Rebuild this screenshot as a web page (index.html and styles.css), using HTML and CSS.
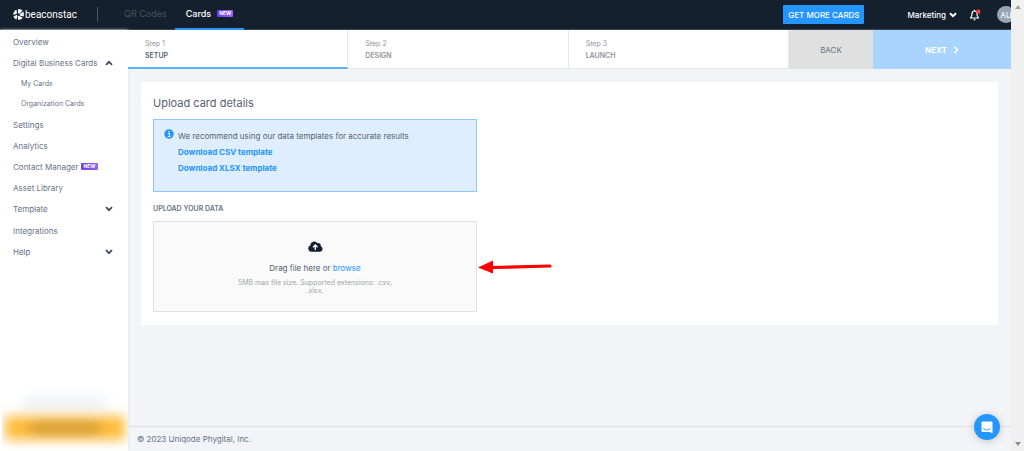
FILE: index.html
```html
<!DOCTYPE html>
<html lang="en">
  <head>
    <meta charset="UTF-8" />
    <meta name="viewport" content="width=device-width, initial-scale=1" />
    <title>Upload card details</title>
    <link rel="stylesheet" href="styles.css">
  </head>
  <body>
    <div class="app">
      <header class="topbar">
        <a class="logo" href="#">
          <svg viewBox="0 0 22 22" width="11" height="11">
            <path d="M10 0.500C14 0 17 1 19 3L13 9.500L10 8.500z" fill="#fff" />
            <path d="M20.500 5C22 8 22 12 21 15L13.500 13V10.500z" fill="#fff" />
            <path d="M19.500 17.500C17 20.500 14 21.700 10 21.500L9.500 14L12 13.500z" fill="#fff" />
            <path d="M7 21C4 20 2 18 1 15L7.500 11.500L8.500 13.500z" fill="#fff" />
            <path d="M0.500 12C0 8 3 3 7 1.500L8 9z" fill="#fff" />
          </svg>
          <span>beaconstac</span>
        </a>
        <nav class="tabs">
          <a class="tab muted" href="#">QR Codes</a>
          <a class="tab active" href="#">Cards <span class="badge">NEW</span></a>
        </nav>
        <div class="account">
          <button class="more-cards">GET MORE CARDS</button>
          <button class="org">
            Marketing
            <svg viewBox="0 0 8 6" width="8" height="6"><path d="M1 1.2L4 4.2L7 1.2" fill="none" stroke="#fff" stroke-width="2" /></svg>
          </button>
          <button class="bell" aria-label="Notifications">
            <svg viewBox="0 0 24 24" width="12" height="12">
              <path d="M3 18c3-3 3-5 3-8 0-4 2-6 5-6s5 2 5 6c0 3 0 5 3 8z" fill="none" stroke="#fff" stroke-width="2.4" stroke-linejoin="round" />
              <path d="M8.500 20.500h5c0 3-5 3-5 0z" fill="#fff" />
              <path d="M11 4V1.500" stroke="#fff" stroke-width="2.400" />
              <circle cx="18.500" cy="5.500" r="4.500" fill="#fb3b4e" />
            </svg>
          </button>
          <button class="avatar">AU</button>
        </div>
      </header>

      <div class="body">
        <aside class="sidebar">
          <nav class="menu">
            <a href="#">Overview</a>
            <a class="group" href="#">
              Digital Business Cards
              <svg viewBox="0 0 8 6" width="8" height="6"><path d="M1 4.800L4 1.800L7 4.800" /></svg>
            </a>
            <a class="sub" href="#">My Cards</a>
            <a class="sub" href="#">Organization Cards</a>
            <a href="#">Settings</a>
            <a href="#">Analytics</a>
            <a href="#">Contact Manager <span class="badge">NEW</span></a>
            <a href="#">Asset Library</a>
            <a class="group" href="#">
              Template
              <svg viewBox="0 0 8 6" width="8" height="6"><path d="M1 1.200L4 4.200L7 1.200" /></svg>
            </a>
            <a href="#">Integrations</a>
            <a class="group" href="#">
              Help
              <svg viewBox="0 0 8 6" width="8" height="6"><path d="M1 1.200L4 4.200L7 1.200" /></svg>
            </a>
          </nav>
          <div class="promo">
            <div class="promo-text"></div>
            <div class="promo-button"><div class="promo-label"></div></div>
          </div>
        </aside>

        <main class="main">
          <div class="steps">
            <div class="step current">
              <span>Step 1</span>
              <strong>SETUP</strong>
            </div>
            <div class="step">
              <span>Step 2</span>
              <strong>DESIGN</strong>
            </div>
            <div class="step">
              <span>Step 3</span>
              <strong>LAUNCH</strong>
            </div>
            <button class="back">BACK</button>
            <button class="next">
              NEXT
              <svg viewBox="0 0 6 8" width="6" height="8"><path d="M1.500 1L4.500 4L1.500 7" fill="none" stroke="#fff" stroke-width="1.600" /></svg>
            </button>
          </div>

          <section class="card">
            <h1>Upload card details</h1>
            <div class="notice">
              <svg viewBox="0 0 20 20" width="10" height="10">
                <circle cx="10" cy="10" r="9.500" fill="#2595ff" />
                <path d="M8 9h3v6M7.500 15h5.500" fill="none" stroke="#fff" stroke-width="2" />
                <circle cx="10" cy="5.500" r="1.600" fill="#fff" />
              </svg>
              <div class="notice-text">
                <p>We recommend using our data templates for accurate results</p>
                <a href="#">Download CSV template</a>
                <a href="#">Download XLSX template</a>
              </div>
            </div>

            <h2>UPLOAD YOUR DATA</h2>
            <div class="dropzone">
              <svg class="cloud" viewBox="0 0 30 22" width="15" height="11">
                <path d="M7 21.500a6.500 6.500 0 0 1-2.500-12.500A8 8 0 0 1 19 4.500a5 5 0 0 1 6.500 6A5.700 5.700 0 0 1 24 21.500z" fill="#15202e" />
                <path d="M14.500 18V9M10 12.500L14.500 8L19 12.500" fill="none" stroke="#fff" stroke-width="2.600" />
              </svg>
              <p>Drag file here or <a href="#">browse</a></p>
              <small>5MB max file size. Supported extensions: .csv, .xlsx.</small>
              <svg class="arrow" viewBox="0 0 74 14" width="74" height="14">
                <path d="M14 7.500L72 6" stroke="#fe0000" stroke-width="3.200" stroke-linecap="round" />
                <path d="M0 7.500L15 0.500V13.500z" fill="#fe0000" />
              </svg>
            </div>
          </section>

          <footer>© 2023 Uniqode Phygital, Inc.</footer>
        </main>
      </div>
    </div>

    <div class="scrollbar">
      <svg viewBox="0 0 6 4" width="6" height="4"><path d="M3 0L6 4H0z" fill="#a3a3a3" /></svg>
      <svg viewBox="0 0 6 4" width="6" height="4"><path d="M3 4L6 0H0z" fill="#8a8a8a" /></svg>
    </div>

    <button class="chat" aria-label="Open chat">
      <svg viewBox="0 0 24 26" width="12" height="13">
        <path d="M3 1h18a2 2 0 0 1 2 2v22l-5-3H3a2 2 0 0 1-2-2V3a2 2 0 0 1 2-2z" fill="#fff" />
        <path d="M5 15c4 4 10 4 14 0" fill="none" stroke="#2595ff" stroke-width="1.800" stroke-linecap="round" />
      </svg>
    </button>
  </body>
</html>
```
FILE: styles.css
```css
* {
  box-sizing: border-box;
}
body {
  margin: 0;
  display: flex;
  min-height: 100vh;
  font-family: Inter, "Open Sans", sans-serif;
  font-size: 8px;
  line-height: 12px;
  color: #56616f;
  background: #f2f4f7;
}
a {
  color: inherit;
  text-decoration: none;
}
button {
  border: none;
  padding: 0;
  font: inherit;
  cursor: pointer;
}
svg {
  display: block;
  flex: none;
}
h1,
h2,
p {
  margin: 0;
}
.app {
  flex: 1;
  min-width: 0;
  display: flex;
  flex-direction: column;
  overflow: hidden;
}

/* top bar */
.topbar {
  display: flex;
  align-items: center;
  height: 30px;
  padding-left: 13px;
  background: #15202e;
  border-bottom: 1px solid #3a4554;
  color: #fff;
}
.logo {
  display: flex;
  align-items: center;
  gap: 1px;
  width: 85px;
  height: 15px;
  border-right: 1px solid #4a5563;
  font-family: Roboto, sans-serif;
  font-size: 10px;
}
.tabs {
  display: flex;
  height: 30px;
  margin-left: 15px;
}
.tab {
  display: flex;
  align-items: center;
  gap: 6px;
  padding: 0 11px;
  font-size: 9px;
  border-bottom: 2px solid transparent;
}
.tab.muted {
  padding-right: 8px;
  color: #48515d;
}
.tab.active {
  font-weight: 500;
  border-color: #2595ff;
}
.badge {
  padding: 0 2px;
  border-radius: 1px;
  background: linear-gradient(90deg, #6a3df0, #9b63f0);
  color: #fff;
  font-size: 5px;
  line-height: 7px;
  font-weight: 700;
}
.account {
  display: flex;
  align-items: center;
  margin-left: auto;
}
.more-cards {
  width: 81px;
  height: 19px;
  margin-right: 43px;
  border-radius: 1px;
  background: #2595ff;
  color: #fff;
  font-weight: 500;
}
.org {
  display: flex;
  align-items: center;
  gap: 3px;
  margin-right: 12px;
  background: none;
  color: #fff;
  font-weight: 500;
}
.bell {
  margin-right: 16px;
  background: none;
}
.avatar {
  width: 18px;
  height: 17px;
  margin-right: -4px;
  border-radius: 50%;
  background: #98a5b3;
  color: #fff;
}

/* sidebar */
.body {
  flex: 1;
  display: flex;
}
.sidebar {
  flex: none;
  display: flex;
  flex-direction: column;
  width: 128px;
  background: #fff;
  box-shadow: 0 0 3px #dde1e6;
}
.menu {
  display: flex;
  flex-direction: column;
  padding: 1px 15px 0 13px;
  color: #667386;
}
.menu a {
  display: flex;
  align-items: center;
  gap: 3px;
  height: 21px;
}
.menu .group {
  justify-content: space-between;
  height: 22px;
}
.menu .sub {
  height: 20px;
  padding-left: 8px;
  font-size: 7px;
}
.menu path {
  fill: none;
  stroke: #3f4c5c;
  stroke-width: 1.8;
}
.promo {
  margin: auto 0 2px 2px;
  padding-top: 16px;
  height: 67px;
  overflow: hidden;
}
.promo-text {
  height: 10px;
  margin: 0 22px 8px;
  background: #e9ecf0;
  filter: blur(6px);
}
.promo-button {
  display: flex;
  align-items: center;
  justify-content: center;
  height: 24px;
  margin: 0 3px;
  background: #ffbb3c;
  filter: blur(6px);
}
.promo-label {
  width: 70px;
  height: 12px;
  background: #d29b35;
}

/* steps */
.main {
  flex: 1;
  min-width: 0;
  display: flex;
  flex-direction: column;
}
.steps {
  display: flex;
  height: 39px;
  background: #fff;
}
.step {
  flex: 1;
  display: flex;
  flex-direction: column;
  padding: 8px 17px 0;
  font-size: 7px;
  color: #8e949c;
  border-right: 1px solid #e6e8eb;
  border-bottom: 1px solid #e6e8eb;
}
.step strong {
  font-weight: 600;
}
.step.current {
  border-bottom: 2px solid #5cb0fb;
}
.step.current strong {
  color: #56616f;
}
.back {
  width: 84px;
  background: #e0e0e0;
  color: #66758a;
}
.next {
  display: flex;
  align-items: center;
  justify-content: center;
  gap: 6px;
  width: 138px;
  background: #a8d4ff;
  color: #fff;
  font-weight: 700;
}

/* upload card */
.card {
  margin: 13px;
  padding: 13px 12px;
  background: #fff;
}
.card h1 {
  font-size: 11px;
  line-height: 16px;
  font-weight: 400;
  margin-bottom: 8px;
}
.notice {
  display: flex;
  gap: 4px;
  max-width: 324px;
  height: 73px;
  padding: 9px 10px;
  border: 1px solid #8fc8fb;
  background: #deeeff;
}
.notice-text {
  display: flex;
  flex-direction: column;
  line-height: 16px;
}
.notice-text p {
  line-height: 14px;
  margin-bottom: 1px;
}
.notice-text a {
  color: #2595ff;
  font-weight: 700;
}
.card h2 {
  margin: 11px 0 6px;
  font-size: 7px;
  line-height: 12px;
  font-weight: 600;
  color: #66758a;
}
.dropzone {
  position: relative;
  display: flex;
  flex-direction: column;
  align-items: center;
  max-width: 324px;
  height: 91px;
  padding-top: 19px;
  border: 1px solid #dfe1e4;
  background: #fafafa;
  text-align: center;
}
.dropzone p {
  margin: 10px 0 5px;
}
.dropzone a {
  color: #2595ff;
}
.dropzone small {
  width: 170px;
  font-size: 7px;
  line-height: 8px;
  color: #a0a5ab;
}
.arrow {
  position: absolute;
  left: 100%;
  top: 38px;
  margin-left: 2px;
}
footer {
  margin-top: auto;
  padding: 6px 9px;
  border-top: 1px solid #dce1e9;
  color: #66758a;
}

.scrollbar {
  display: flex;
  flex-direction: column;
  align-items: center;
  justify-content: space-between;
  width: 13px;
  padding: 5px 0;
  background: #f0f0f0;
}
.chat {
  position: fixed;
  right: 24px;
  bottom: 11px;
  display: flex;
  align-items: center;
  justify-content: center;
  width: 26px;
  height: 26px;
  border-radius: 50%;
  background: #2595ff;
  box-shadow: 0 1px 8px rgba(0, 0, 0, 0.2);
}
```
